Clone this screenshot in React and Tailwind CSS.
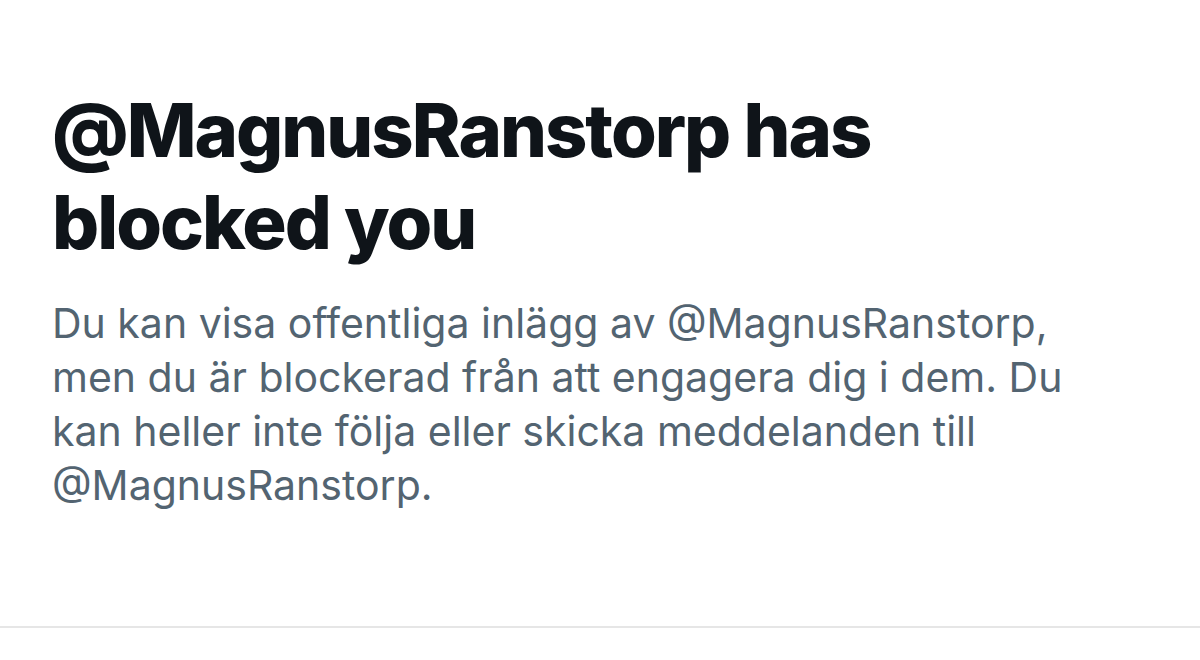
export default function App() {
  return (
    <div className="w-[1200px] h-[660px] bg-white overflow-hidden">
      <div className="h-[628px] border-b-2 border-[#e6e6e6] px-[52px] pt-[84px]">
        <h1 className="font-['Inter',sans-serif] font-extrabold text-[74px] leading-[92px] tracking-[-2px] text-[#0f1419] w-[900px]">
          @MagnusRanstorp has blocked you
        </h1>
        <p className="mt-[28px] font-['Inter',sans-serif] text-[41px] leading-[54px] text-[#536471] w-[1040px]">
          Du kan visa offentliga inlägg av @MagnusRanstorp, men du är blockerad från att engagera dig i dem. Du kan heller inte följa eller skicka meddelanden till @MagnusRanstorp.
        </p>
      </div>
    </div>
  )
}
